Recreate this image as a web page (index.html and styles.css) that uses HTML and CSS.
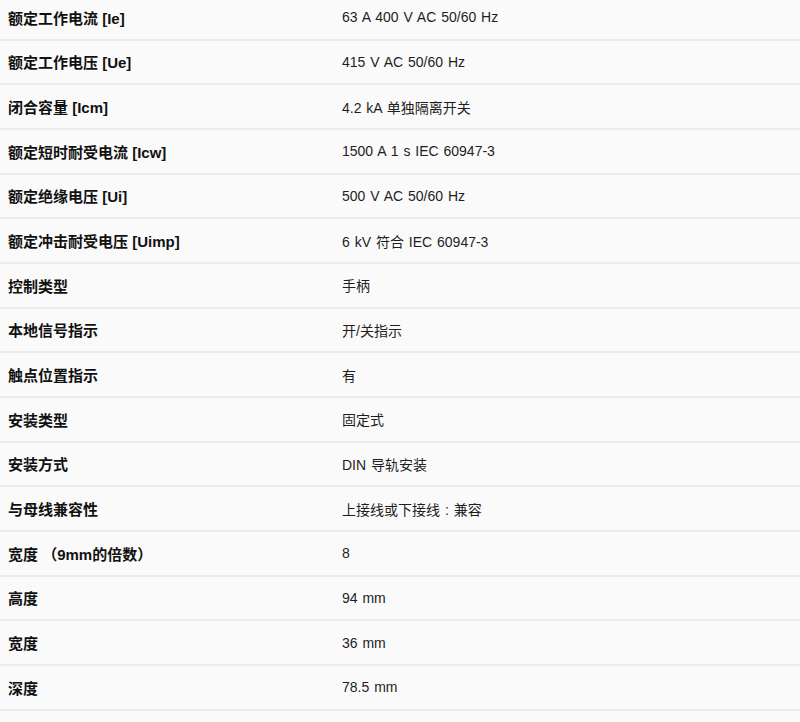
FILE: index.html
```html
<!DOCTYPE html>
<html lang="zh-CN">
<head>
<meta charset="utf-8">
<title>技术参数</title>
<link rel="stylesheet" href="styles.css">
</head>
<body>
<div class="specs">
  <div class="row"><div class="label">额定工作电流 [Ie]</div><div class="value">63 A 400 V AC 50/60 Hz</div></div>
  <div class="row"><div class="label">额定工作电压 [Ue]</div><div class="value">415 V AC 50/60 Hz</div></div>
  <div class="row"><div class="label">闭合容量 [Icm]</div><div class="value">4.2 kA 单独隔离开关</div></div>
  <div class="row"><div class="label">额定短时耐受电流 [Icw]</div><div class="value">1500 A 1 s IEC 60947-3</div></div>
  <div class="row"><div class="label">额定绝缘电压 [Ui]</div><div class="value">500 V AC 50/60 Hz</div></div>
  <div class="row"><div class="label">额定冲击耐受电压 [Uimp]</div><div class="value">6 kV 符合 IEC 60947-3</div></div>
  <div class="row"><div class="label">控制类型</div><div class="value">手柄</div></div>
  <div class="row"><div class="label">本地信号指示</div><div class="value">开/关指示</div></div>
  <div class="row"><div class="label">触点位置指示</div><div class="value">有</div></div>
  <div class="row"><div class="label">安装类型</div><div class="value">固定式</div></div>
  <div class="row"><div class="label">安装方式</div><div class="value">DIN 导轨安装</div></div>
  <div class="row"><div class="label">与母线兼容性</div><div class="value">上接线或下接线 : 兼容</div></div>
  <div class="row"><div class="label">宽度 （9mm的倍数）</div><div class="value">8</div></div>
  <div class="row"><div class="label">高度</div><div class="value">94 mm</div></div>
  <div class="row"><div class="label">宽度</div><div class="value">36 mm</div></div>
  <div class="row"><div class="label">深度</div><div class="value">78.5 mm</div></div>
</div>
</body>
</html>
```
FILE: styles.css
```css
html, body {
  margin: 0;
  padding: 0;
  background: #fafafa;
}
body {
  font-family: "Liberation Sans", "Noto Sans CJK SC", sans-serif;
  color: #1c1c1c;
}
.specs {
  margin-top: -4px;
}
.row {
  display: grid;
  grid-template-columns: 334px 1fr;
  align-items: center;
  height: 44.67px;
  box-sizing: border-box;
  border-bottom: 2px solid #ebebeb;
}
.label {
  padding-left: 8px;
  font-size: 15px;
  font-weight: bold;
  color: #111;
}
.value {
  padding-left: 8px;
  font-size: 14px;
  word-spacing: 1px;
  color: #1e1e1e;
}
```
